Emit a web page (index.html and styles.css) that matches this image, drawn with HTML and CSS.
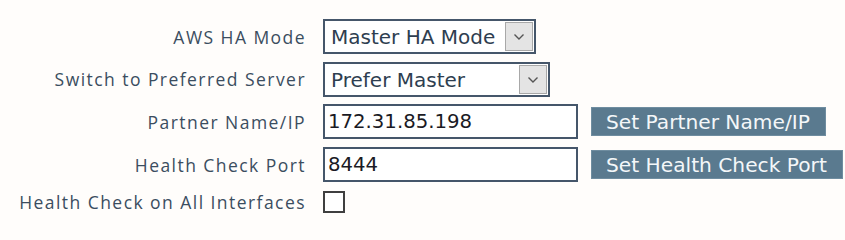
FILE: index.html
```html
<!DOCTYPE html>
<html>
<head>
<meta charset="utf-8">
<link rel="stylesheet" href="styles.css">
</head>
<body>
<form class="form">
  <label class="lbl">AWS HA Mode</label>
  <div class="sel sel-mode">
    <span class="sel-text">Master HA Mode</span>
    <span class="sel-arrow"><svg width="12" height="8" viewBox="0 0 12 8"><path d="M1.5 1.5 L6 6 L10.5 1.5" fill="none" stroke="#555" stroke-width="1.4"/></svg></span>
  </div>
  <span></span>

  <label class="lbl">Switch to Preferred Server</label>
  <div class="sel sel-pref">
    <span class="sel-text">Prefer Master</span>
    <span class="sel-arrow"><svg width="12" height="8" viewBox="0 0 12 8"><path d="M1.5 1.5 L6 6 L10.5 1.5" fill="none" stroke="#555" stroke-width="1.4"/></svg></span>
  </div>
  <span></span>

  <label class="lbl">Partner Name/IP</label>
  <input class="txt" type="text" value="172.31.85.198">
  <button type="button" class="btn">Set Partner Name/IP</button>

  <label class="lbl">Health Check Port</label>
  <input class="txt" type="text" value="8444">
  <button type="button" class="btn">Set Health Check Port</button>

  <label class="lbl">Health Check on All Interfaces</label>
  <span class="chk"></span>
  <span></span>
</form>
</body>
</html>
```

FILE: styles.css
```css
html, body {
  margin: 0;
  padding: 0;
  background: #fffdfb;
}
.form {
  display: grid;
  grid-template-columns: 323px max-content max-content;
  align-items: center;
  row-gap: 8px;
  padding-top: 19px;
}
.lbl {
  font-family: "Open Sans", sans-serif;
  font-size: 17.5px;
  letter-spacing: 1.45px;
  color: #3b4d5f;
  text-align: right;
  padding-right: 17px;
}
.sel {
  display: flex;
  align-items: stretch;
  height: 35px;
  box-sizing: border-box;
  border: 2px solid #45566a;
  background: #fff;
  justify-self: start;
  padding: 1px 1px 1px 0;
}
.sel-mode { width: 213px; }
.sel-pref { width: 227px; margin-bottom: -1px; }
.sel-text {
  flex: 1;
  font-family: "DejaVu Sans", Verdana, sans-serif;
  font-size: 20px;
  color: #2e3e50;
  padding-left: 6px;
  display: flex;
  align-items: center;
  white-space: nowrap;
}
.sel-arrow {
  width: 28px;
  box-sizing: border-box;
  background: #e4e4e4;
  border: 1px solid #a8a8a8;
  display: flex;
  align-items: center;
  justify-content: center;
}
.txt {
  width: 255px;
  height: 35px;
  box-sizing: border-box;
  border: 2px solid #45566a;
  background: #fff;
  font-family: "DejaVu Sans", Verdana, sans-serif;
  font-size: 19.7px;
  color: #1a1a24;
  padding: 0 3px;
  margin: 0;
  outline: none;
}
.btn {
  margin-left: 13px;
  height: 29px;
  border: 1px solid #6f8da0;
  background: #5a7a8f;
  color: #f4f7f9;
  font-family: "DejaVu Sans", Verdana, sans-serif;
  font-size: 20.2px;
  padding: 0 15px 0 14px;
  justify-self: start;
  white-space: nowrap;
}
.chk {
  width: 22px;
  height: 22px;
  box-sizing: border-box;
  border: 2px solid #3f3f3f;
  background: #fff;
}
```
